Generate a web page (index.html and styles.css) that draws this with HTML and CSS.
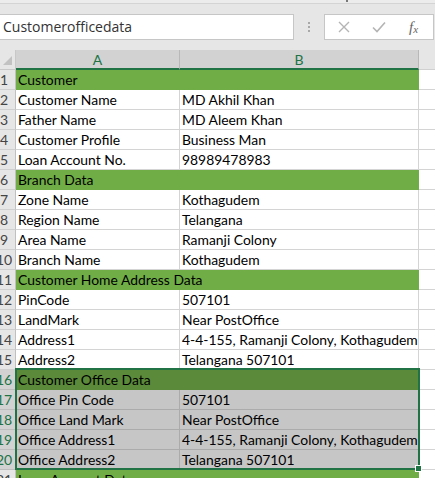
FILE: index.html
```html
<!DOCTYPE html>
<html>
<head>
<meta charset="utf-8">
<link rel="stylesheet" href="styles.css">
</head>
<body>
<div class="topbar"><span class="tick"></span></div>
<div class="formula-row">
  <div class="namebox">Customerofficedata</div>
  <div class="dots"><i></i><i></i><i></i></div>
  <div class="fxbox">
    <svg class="ico" width="12" height="12" viewBox="0 0 12 12"><path d="M1 1L11 11M11 1L1 11" stroke="#b4b4b4" stroke-width="1.4" fill="none"/></svg>
    <svg class="ico" width="14" height="12" viewBox="0 0 14 12"><path d="M1 6.5L5 10.5L13 1.5" stroke="#b4b4b4" stroke-width="1.6" fill="none"/></svg>
    <span class="fx">f<sub>x</sub></span>
  </div>
</div>
<div class="sheet">
  <div class="corner"><span class="tri"></span></div>
  <div class="colh sel">A</div>
  <div class="colh sel">B</div>
  <div class="colh rest"></div>

  <div class="rh"><span>1</span></div><div class="c green span">Customer</div><div class="c x"></div>
  <div class="rh"><span>2</span></div><div class="c">Customer Name</div><div class="c">MD Akhil Khan</div><div class="c x"></div>
  <div class="rh"><span>3</span></div><div class="c">Father Name</div><div class="c">MD Aleem Khan</div><div class="c x"></div>
  <div class="rh"><span>4</span></div><div class="c">Customer Profile</div><div class="c">Business Man</div><div class="c x"></div>
  <div class="rh"><span>5</span></div><div class="c">Loan Account No.</div><div class="c">98989478983</div><div class="c x"></div>
  <div class="rh"><span>6</span></div><div class="c green span">Branch Data</div><div class="c x"></div>
  <div class="rh"><span>7</span></div><div class="c">Zone Name</div><div class="c">Kothagudem</div><div class="c x"></div>
  <div class="rh"><span>8</span></div><div class="c">Region Name</div><div class="c">Telangana</div><div class="c x"></div>
  <div class="rh"><span>9</span></div><div class="c">Area Name</div><div class="c">Ramanji Colony</div><div class="c x"></div>
  <div class="rh"><span>10</span></div><div class="c">Branch Name</div><div class="c">Kothagudem</div><div class="c x"></div>
  <div class="rh"><span>11</span></div><div class="c green span">Customer Home Address Data</div><div class="c x"></div>
  <div class="rh"><span>12</span></div><div class="c">PinCode</div><div class="c">507101</div><div class="c x"></div>
  <div class="rh"><span>13</span></div><div class="c">LandMark</div><div class="c">Near PostOffice</div><div class="c x"></div>
  <div class="rh"><span>14</span></div><div class="c">Address1</div><div class="c">4-4-155, Ramanji Colony, Kothagudem</div><div class="c x"></div>
  <div class="rh"><span>15</span></div><div class="c">Address2</div><div class="c">Telangana 507101</div><div class="c x"></div>
  <div class="rh hs"><span>16</span></div><div class="c green dark">Customer Office Data</div><div class="c green dark"></div><div class="c x"></div>
  <div class="rh hs"><span>17</span></div><div class="c s">Office Pin Code</div><div class="c s">507101</div><div class="c x"></div>
  <div class="rh hs"><span>18</span></div><div class="c s">Office Land Mark</div><div class="c s">Near PostOffice</div><div class="c x"></div>
  <div class="rh hs"><span>19</span></div><div class="c s">Office Address1</div><div class="c s">4-4-155, Ramanji Colony, Kothagudem</div><div class="c x"></div>
  <div class="rh hs"><span>20</span></div><div class="c s">Office Address2</div><div class="c s">Telangana 507101</div><div class="c x"></div>
  <div class="rh"><span>21</span></div><div class="c green span">Loan Account Data</div><div class="c x"></div>

  <div class="selection"><span class="handle"></span></div>
</div>
</body>
</html>
```
FILE: styles.css
```css
html, body {
  margin: 0;
  padding: 0;
  background: #e6e6e6;
  overflow: hidden;
  width: 435px;
  height: 478px;
}
.topbar {
  height: 3px;
  background: #ececec;
  border-bottom: 1px solid #d4d4d4;
  position: relative;
}
.tick {
  position: absolute;
  left: 346px;
  top: 0;
  width: 2px;
  height: 2px;
  background: #777;
}
.formula-row {
  display: flex;
  align-items: flex-start;
  padding-top: 10px;
  height: 36px;
}
.namebox {
  box-sizing: border-box;
  width: 294px;
  height: 26px;
  background: #fff;
  border: 1px solid #c6c6c6;
  border-left: none;
  font-family: "Open Sans", "Noto Sans", sans-serif;
  font-size: 14px;
  color: #333;
  line-height: 24px;
  padding-left: 3px;
}
.dots {
  width: 30px;
  height: 26px;
  display: flex;
  flex-direction: column;
  align-items: center;
  justify-content: center;
  gap: 2px;
}
.dots i {
  display: block;
  width: 2px;
  height: 2px;
  background: #a8a8a8;
}
.fxbox {
  box-sizing: border-box;
  width: 110px;
  height: 26px;
  background: #fff;
  border: 1px solid #c6c6c6;
  display: flex;
  align-items: center;
  padding-left: 13px;
  gap: 0;
}
.ico { display: block; }
.fxbox .ico:first-child { margin-right: 22px; }
.fxbox .ico:nth-child(2) { margin-right: 23px; }
.fx {
  font-family: "Liberation Serif", serif;
  font-style: italic;
  font-size: 15px;
  color: #666;
  line-height: 1;
}
.fx sub { font-size: 11px; vertical-align: -1px; }

.sheet {
  position: relative;
  display: grid;
  grid-template-columns: 16px 164px 239px 1fr;
  grid-auto-rows: 20px;
  font-family: "Lato", "Liberation Sans", sans-serif;
  font-size: 13.9px;
  color: #000;
}
.corner {
  box-sizing: border-box;
  background: #e6e6e6;
  border-right: 1px solid #c8c8c8;
  border-bottom: 1px solid #c8c8c8;
  position: relative;
}
.tri {
  position: absolute;
  right: 3px;
  bottom: 4px;
  width: 0;
  height: 0;
  border-left: 9px solid transparent;
  border-bottom: 9px solid #c2c2c2;
}
.colh {
  box-sizing: border-box;
  display: flex;
  align-items: center;
  justify-content: center;
  font-size: 14px;
  border-right: 1px solid #b8b8b8;
}
.colh.sel {
  background: #d2d2d2;
  color: #217346;
  border-bottom: 2px solid #217346;
}
.colh.rest {
  background: #e6e6e6;
  border-right: none;
  border-bottom: 1px solid #d0d0d0;
}
.rh {
  box-sizing: border-box;
  background: #e6e6e6;
  border-right: 1px solid #c0c0c0;
  border-bottom: 1px solid #d0d0d0;
  overflow: hidden;
  color: #444;
  font-size: 14px;
  display: flex;
  align-items: center;
}
.rh span {
  flex: none;
  width: 24px;
  margin-left: -8px;
  text-align: center;
}
.rh.hs {
  background: #d2d2d2;
  color: #217346;
  border-right: 1px solid #217346;
  border-bottom-color: #bdbdbd;
}
.c {
  box-sizing: border-box;
  background: #fff;
  border-right: 1px solid #d4d4d4;
  border-bottom: 1px solid #d4d4d4;
  padding-left: 2px;
  line-height: 20px;
  white-space: nowrap;
  overflow: hidden;
}
.c.green {
  background: #70ad47;
  border-color: #70ad47;
}
.c.span { grid-column: span 2; }
.c.green.dark {
  background: #5b8a3a;
  border-color: #5b8a3a;
}
.c.s {
  background: #c6c6c6;
  border-color: #ababab;
}
.c.x { border-right: none; }

.selection {
  position: absolute;
  left: 15px;
  top: 318px;
  width: 405px;
  height: 102px;
  box-sizing: border-box;
  border: 2px solid #217346;
  pointer-events: none;
}
.handle {
  position: absolute;
  right: -4px;
  bottom: -4px;
  width: 5px;
  height: 5px;
  background: #217346;
  border: 1px solid #fff;
}
```
